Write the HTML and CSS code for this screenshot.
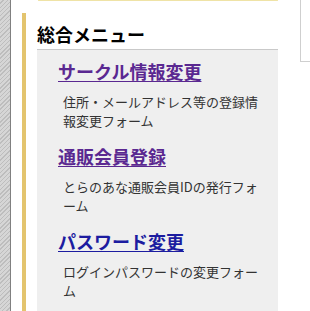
FILE: index.html
```html
<!DOCTYPE html>
<html lang="ja">
<head>
    <meta charset="UTF-8">
    <meta name="viewport" content="width=device-width, initial-scale=1.0">
    <title>総合メニュー</title>
    <link rel="stylesheet" href="styles.css">
</head>
<body>
    <div class="rail"></div>

    <div class="main">
        <div class="notice"></div>

        <div class="menu-section">
            <h2>総合メニュー</h2>
            <div class="menu-box">
                <div class="menu-item">
                    <a href="#" class="visited">サークル情報変更</a>
                    <p>住所・メールアドレス等の登録情報変更フォーム</p>
                </div>
                <div class="menu-item">
                    <a href="#" class="visited">通販会員登録</a>
                    <p>とらのあな通販会員IDの発行フォーム</p>
                </div>
                <div class="menu-item">
                    <a href="#">パスワード変更</a>
                    <p>ログインパスワードの変更フォーム</p>
                </div>
            </div>
        </div>
    </div>

    <div class="aside">
        <div class="aside-box"></div>
    </div>
</body>
</html>
```

FILE: styles.css
```css
* {
    box-sizing: border-box;
}
body {
    margin: 0;
    height: 311px;
    overflow: hidden;
    display: flex;
    background-color: white;
    font-family: "Noto Sans CJK JP", "Liberation Sans", sans-serif;
}
.rail {
    width: 11px;
    flex-shrink: 0;
    border-right: 1px solid #808080;
    background: repeating-linear-gradient(135deg, #d6d6d6 0, #d6d6d6 2px, #bdbdbd 2px, #bdbdbd 3px);
}
.main {
    width: 289px;
    flex-shrink: 0;
    padding: 0 22px 0 11px;
    display: flex;
    flex-direction: column;
}
.notice {
    height: 2px;
    margin-left: 16px;
    border: 1px solid #efe3a6;
    border-top: none;
    border-radius: 0 0 4px 4px;
}
.menu-section {
    flex: 1;
    margin-top: 12px;
    border-left: 4px solid #e3c46e;
    padding-left: 11px;
    display: flex;
    flex-direction: column;
}
h2 {
    margin: 0;
    padding-top: 9px;
    height: 36px;
    font-size: 18px;
    line-height: 24px;
    font-weight: bold;
    color: #000;
}
.menu-box {
    flex: 1;
    background-color: #efefef;
    border-top: 1px solid #c9c9c9;
    padding: 9px 15px 0 21px;
    overflow: hidden;
}
.menu-item {
    margin-bottom: 14px;
}
.menu-item a {
    display: block;
    font-size: 18px;
    line-height: 24px;
    font-weight: bold;
    color: #1c1ca0;
    text-decoration: underline;
    text-underline-offset: 2px;
}
.menu-item a.visited {
    color: #5a2891;
}
.menu-item p {
    margin: 9px 0 0 5px;
    font-size: 13px;
    line-height: 19px;
    color: #333;
}
.aside {
    flex: 1;
}
.aside-box {
    height: 62px;
    border: 1px solid #cfcfcf;
    border-right: none;
    border-top: none;
}
```
